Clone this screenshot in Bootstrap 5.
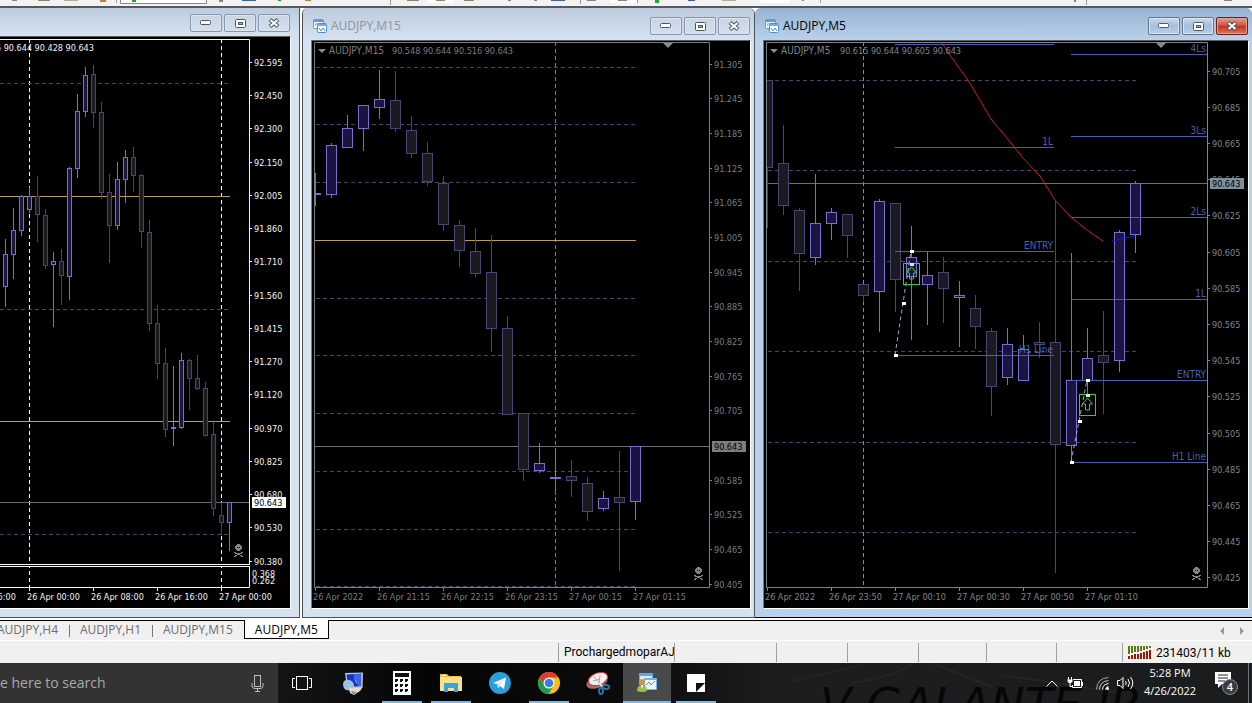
<!DOCTYPE html>
<html lang="en">
<head>
    <meta charset="UTF-8">
    <meta name="viewport" content="width=device-width, initial-scale=1.0">
    <title>AUDJPY,M5</title>
    <!-- Bootstrap CSS -->
    <link href="https://cdn.jsdelivr.net/npm/bootstrap@5.3.0/dist/css/bootstrap.min.css" rel="stylesheet">
    <style>
        body {
            font-family: "Open Sans", "Noto Sans", sans-serif;
            font-size: 12px;
            line-height: 16px;
            background: #f0f0f0;
            color: #000;
            overflow: hidden;
        }
        svg { display: block; }

        /* toolbar remainder above the charts */
        .tool-strip { height: 8px; background: #f3f2f1; border-bottom: 2px solid #55595e; }

        /* chart windows */
        .mdi { background: #fff; padding-bottom: 2px; display: grid; grid-template-columns: minmax(0, 302fr) minmax(0, 453fr) minmax(0, 497fr); }
        .win { background: #d6e2f0; border: 1px solid #4c5158; border-top: 0; border-radius: 6px 6px 0 0; padding: 0 3px 8px 8px; }
        .win-first { border-left: 0; border-radius: 0; padding: 0 8px 8px 0; margin-right: 2px; }
        .win-active { background: #b9d1ea; border-width: 0 0 1px 0; border-color: #000; }
        .win-title { height: 32px; margin: 0 -3px 0 -8px; padding: 4px 4px 0 10px; background: linear-gradient(#bccbdc, #d6e2f0); border-radius: 6px 6px 0 0; color: #8d949c; }
        .win-first .win-title { height: 28px; margin: 0 -8px 0 0; padding: 2px 9px 0 0; border-radius: 0; }
        .win-active .win-title { background: linear-gradient(#98b3d2, #b9d1ea); color: #000; }
        .win-btn { width: 32px; height: 18px; padding: 0; border: 1px solid #8695ab; border-radius: 2px; background: linear-gradient(#c8d5e4, #d3dfec); display: flex; align-items: center; justify-content: center; box-shadow: inset 0 0 0 1px #dbe6f2; }
        .win-active .win-btn { border-color: #62758f; background: linear-gradient(#c9daed, #a4bedb 50%, #b9cfe8); }
        .win-active .win-close { border-color: #6b1a16; background: linear-gradient(#e0a093, #c8503c 50%, #c5301c 51%, #d97860); box-shadow: inset 0 0 0 1px #e3a294; }
        .plot { background: #000; border: 1px solid #fff; border-top-color: #5a5e63; border-left-color: #77797c; }
        .win-first .plot { border-left: 0; }
        .plot svg { width: 100%; height: auto; }
        .plot text { font-family: "DejaVu Sans Condensed", "DejaVu Sans", sans-serif; font-size: 9px; }
        .plot text.note { font-size: 10px; }

        /* chart tabs */
        .chart-tabs { height: 21px; border-top: 1px solid #000; border-bottom: 1px solid #fff; }
        .chart-tabs ul { margin-left: -14px; }
        .chart-tabs a { display: block; padding: 1px 11px 0 11px; color: #6d6d6d; text-decoration: none; height: 19px; }
        .chart-tabs li + li { background: linear-gradient(#777, #777) 0 4px / 1px 12px no-repeat; }
        .chart-tabs li + li.current { background: none; }
        .chart-tabs .current a { background: #fff; color: #000; border: 1px solid #000; border-top: 0; margin-top: -1px; padding: 2px 10px 0 10px; }
        .scroll-btn { border: 0; padding: 0; background: none; width: 20px; height: 16px; display: flex; align-items: center; justify-content: center; }

        /* status bar */
        .status { height: 22px; display: grid; grid-template-columns: 558fr 116fr 102fr 71fr 71fr 68fr 70fr 66fr 130fr; font-family: Roboto, "Open Sans", sans-serif; }
        .status > div { border-left: 1px solid #a0a0a0; margin: 2px 0 1px 0; padding-left: 5px; line-height: 18px; white-space: nowrap; min-width: 0; }
        .status > div:first-child { border: 0; }

        /* taskbar */
        .taskbar { height: 40px; background: linear-gradient(90deg, #141516 22%, #050506 34%, #0b0b0c 50%, #1c1d1e 62%, #1b1c1d); overflow: hidden; }
        .wall { position: absolute; right: 0; top: 0; }
        .search { width: 278px; background: #333; font-size: 14px; }
        .search input { background: none; border: 0; color: #a9a9a9; width: 200px; padding: 0; outline: 0; }
        .search input::placeholder { color: #a9a9a9; opacity: 1; }
        .search .mic { margin-right: 14px; }
        .search .mic, .tray button, .app { background: none; border: 0; padding: 0; }
        .app { width: 48px; height: 40px; margin-right: 1px; display: flex; align-items: center; justify-content: center; }
        .app.task-view { margin-right: 3px; }
        .app.open { background: linear-gradient(#76b9ed, #76b9ed) center bottom / 40px 2px no-repeat; }
        .app.front { background: linear-gradient(#76b9ed, #76b9ed) center bottom / 48px 2px no-repeat #48494a; }
        .tray { color: #fff; }
        .tray .clock { width: 72px; font-size: 11px; line-height: 18px; color: #fff; padding-bottom: 2px; }
        .tray .show-desk { width: 4px; border-left: 1px solid #6a6a6a; }
    </style>
</head>
<body>
<div class="d-flex flex-column min-vh-100">

    <!-- Toolbar -->
    <div class="tool-strip" aria-hidden="true">
        <svg width="1252" height="6">
            <path d="M120.500 0V3.500H206.500V0" fill="#fff" stroke="#8a8a8a"/>
            <path d="M116.500 0V3M390.500 0V5M580.500 0V4M637.500 0V3M820.500 0V3M1086.500 0V5" stroke="#999"/>
            <path d="M428 0h25v3h-25zM610 0h26v3h-26zM760 0h30v3h-30z" fill="#fff"/>
            <path d="M132 0h4v2h-4zM655 0h4v3h-4zM278 0h3v1h-3z" fill="#1fa53a"/>
            <path d="M12 0h5v1h-5zM38 0h12v1H38zM219 0h4v2h-4zM407 0h12v1h-12zM436 0h9v1h-9zM464 0h10v1h-10zM508 0h3v1h-3zM534 0h3v1h-3zM587 0h9v1h-9zM618 0h9v1h-9zM802 0h2v1h-2zM1074 0h2v2h-2zM1224 0h8v1h-8z" fill="#8d8273"/>
            <path d="M100 0h6v2h-6zM305 0h6v1h-6z" fill="#b5863e"/>
            <path d="M242 0h14v1h-14zM551 0h14v1h-14zM688 0h7v1h-7z" fill="#3d5fa5"/>
            <path d="M64 0h14v1H64zM722 0h14v1h-14z" fill="#b9a9a4"/>
        </svg>
    </div>

    <!-- Chart windows -->
    <main class="mdi">
        <section class="win win-first">
            <div class="win-title d-flex align-items-center justify-content-end" data-buttons></div>
            <div class="plot"><svg id="chart-h1" viewBox="0 37 290 571"></svg></div>
        </section>
        <section class="win">
            <div class="win-title d-flex align-items-center">
                <svg width="14" height="14"><use href="#chart-icon"/></svg>
                <span class="ms-1 me-auto">AUDJPY,M15</span>
                <div class="d-flex" data-buttons></div>
            </div>
            <div class="plot"><svg id="chart-m15" viewBox="312 41 438 567"></svg></div>
        </section>
        <section class="win win-active">
            <div class="win-title d-flex align-items-center">
                <svg width="14" height="14"><use href="#chart-icon"/></svg>
                <span class="ms-1 me-auto">AUDJPY,M5</span>
                <div class="d-flex" data-buttons></div>
            </div>
            <div class="plot"><svg id="chart-m5" viewBox="764 41 484 567"></svg></div>
        </section>
    </main>

    <!-- Chart tabs -->
    <nav class="chart-tabs d-flex align-items-center">
        <ul class="list-unstyled d-flex mb-0 me-auto">
            <li><a href="#">AUDJPY,H4</a></li>
            <li><a href="#">AUDJPY,H1</a></li>
            <li><a href="#">AUDJPY,M15</a></li>
            <li class="current"><a href="#" aria-current="page">AUDJPY,M5</a></li>
        </ul>
        <button class="scroll-btn" aria-label="Scroll left"><svg width="4" height="8"><path d="M4 0V8L0 4z" fill="#999"/></svg></button>
        <button class="scroll-btn" aria-label="Scroll right"><svg width="4" height="8"><path d="M0 0V8L4 4z" fill="#999"/></svg></button>
    </nav>

    <!-- Status bar -->
    <footer class="status">
        <div></div>
        <div>ProchargedmoparAJ</div>
        <div></div>
        <div></div>
        <div></div>
        <div></div>
        <div></div>
        <div></div>
        <div class="d-flex align-items-center gap-1"><svg id="traffic" width="24" height="13"></svg><span>231403/11 kb</span></div>
    </footer>

    <!-- Taskbar -->
    <div class="taskbar d-flex position-relative">
        <svg class="wall" width="460" height="40" aria-hidden="true">
            <path d="M0 18L70 2M60 20Q110 12 120 0M140 0L200 24M210 12L330 30" stroke="#242526" stroke-width="2" fill="none"/>
            <text x="28" y="58" font-family="DejaVu Sans" font-style="italic" font-size="46" fill="#060606">V GALANTE JR</text>
        </svg>
        <div class="search d-flex align-items-center position-relative">
            <input type="text" placeholder="e here to search" aria-label="Search">
            <button class="mic ms-auto" aria-label="Voice search">
                <svg width="13" height="17" fill="none" stroke="#bdbdbd"><rect x="3.500" y=".5" width="6" height="11"/><path d="M1 8v3q0 2.500 3 2.500h5q3 0 3-2.500V8M6.500 13.500v3M4 16.500h5"/></svg>
            </button>
        </div>
        <div class="d-flex position-relative me-auto">
            <button class="app task-view" aria-label="Task view">
                <svg width="20" height="14" fill="none" stroke="#fff"><rect x="4.500" y=".5" width="11" height="13"/><path d="M3 2.500H.5v9H3M17 2.500h2.500v9H17"/></svg>
            </button>
            <button class="app" aria-label="Remote desktop">
                <svg width="23" height="25"><path d="M3 2L21 1.500 20.500 17 5 17z" fill="#c3c9d2"/><path d="M4.500 3.500L12 3 13 10 17 15.500 6 15.500z" fill="#1433c4"/><path d="M11 3l8.500-.5L19 15.500l-3-.5z" fill="#3a66e8"/><path d="M1 13q1-5 6-4 5 1 5 6l-2 5-6-1q-3-2-3-6z" fill="#9cc0e2"/><path d="M7 17l13 0-2 3-6 4-4-2z" fill="#e2dbd0"/><path d="M9 20l6 1-4 3z" fill="#a08c79"/></svg>
            </button>
            <button class="app open" aria-label="Calculator">
                <svg width="18" height="24"><path d="M0 0h18v24H0z" fill="#fff"/><path d="M2 2h14v4H2z" fill="#111"/><path d="M2 8h3v2H4v1H2zM7 8h3v2H9v1H7zM12 8h3v2h-1v1h-2zM2 13h3v2H4v1H2zM7 13h3v2H9v1H7zM12 13h3v2h-1v1h-2zM2 18h3v2H4v1H2zM7 18h3v2H9v1H7zM12 18h3v2h-1v1h-2z" fill="#111"/></svg>
            </button>
            <button class="app open" aria-label="File Explorer">
                <svg width="22" height="18"><path d="M0 0h7l2 2h12v4H0z" fill="#e8bd53"/><path d="M0 3h22v14H0z" fill="#fbe08a"/><path d="M2 1h4v1H2z" fill="#fff"/><path d="M4 9h14v9h-4v-4H8v4H4z" fill="#36a3d9"/></svg>
            </button>
            <button class="app" aria-label="Telegram">
                <svg width="22" height="22"><circle cx="11" cy="11" r="11" fill="#2c9fd8"/><path d="M4 11L17 5.500 15 17l-4-3-2 2-.5-4z" fill="#fff"/><path d="M8.500 12L15 7.500 10 13l-1 3z" fill="#b9d4e6"/></svg>
            </button>
            <button class="app open" aria-label="Chrome">
                <svg width="22" height="22"><circle cx="11" cy="11" r="11" fill="#fbbc16"/><path d="M1.500 5.500A11 11 0 0 1 20.500 5.500H11L6.200 13.500z" fill="#dd3b2e"/><path d="M1.500 5.500L6.200 13.500 11 16 15.500 13.700 10.500 22A11 11 0 0 1 1.500 5.500z" fill="#1e9c50"/><circle cx="11" cy="11" r="5.500" fill="#fff"/><circle cx="11" cy="11" r="4.300" fill="#3b7de0"/></svg>
            </button>
            <button class="app" aria-label="Snipping Tool">
                <svg width="24" height="24" fill="none"><ellipse cx="11" cy="11" rx="11" ry="6" transform="rotate(-20 11 11)" fill="#a46a6c"/><ellipse cx="12" cy="8" rx="10" ry="6" transform="rotate(-20 12 8)" fill="#f4eeee" stroke="#c9323a"/><path d="M7 5l9 10M14 4l-1 10M7 10l7-2" stroke="#b3a7a4"/><path d="M13 12l4 4" stroke="#dfe5ea" stroke-width="2"/><ellipse cx="15" cy="20" rx="2" ry="3" stroke="#2176a8" stroke-width="2"/><ellipse cx="20" cy="16" rx="3" ry="2" stroke="#2176a8" stroke-width="2"/></svg>
            </button>
            <button class="app front" aria-label="MetaTrader">
                <svg width="20" height="20"><path d="M2 0h14v12H2z" fill="#5aa9e2"/><path d="M3 3h12v8H3z" fill="#d8ecfa"/><path d="M7 5h13v12H7z" fill="#70b4e6"/><path d="M8 7h11v9H8z" fill="#eef7fd"/><path d="M9 12l3-3 2 3 4-4" stroke="#4e98d4" fill="none"/><circle cx="5" cy="9" r="3" fill="#e18c43"/><path d="M0 18q0-6 5-6t5 6q-5 2-10 0z" fill="#9cbf4c"/><path d="M4 12h2l-1 4z" fill="#fff"/></svg>
            </button>
            <button class="app open" aria-label="Sticky Notes">
                <svg width="18" height="18"><path d="M0 0h18v18H0z" fill="#fff"/><path d="M9 9h9l-9 9z" fill="#111"/></svg>
            </button>
        </div>
        <div class="tray d-flex align-items-center position-relative">
            <button aria-label="Hidden icons"><svg width="12" height="7" fill="none" stroke="#fff"><path d="M.5 6.500L6 1l5.500 5.500"/></svg></button>
            <button class="ms-2" aria-label="Battery"><svg width="18" height="13" fill="none" stroke="#fff"><path d="M7 2.500h8.500v8h-9V8"/><path d="M8 4h6v5H8z" fill="#fff" stroke="none"/><path d="M16.500 5v4"/><path d="M2.500 0v3M5.500 0v3M4 6v3.500h2"/><path d="M1.500 2.500h5v2L5 6H3L1.500 4.500z" fill="#fff" stroke="none"/></svg></button>
            <button class="ms-2 ps-1" aria-label="Network"><svg width="13" height="13" fill="none" stroke="#fff"><path d="M9.500 12.500q0-2 3-3" /><path d="M6.500 12.500q0-5 6-6"/><path d="M3.500 12.500q0-8 9-9" stroke="#ccc"/><path d="M.5 12.500Q1 1 12.500.5" stroke="#aaa"/><circle cx="11.500" cy="11.500" r="1.500" fill="#fff" stroke="none"/></svg></button>
            <button class="ms-2" aria-label="Volume"><svg width="17" height="14" fill="none" stroke="#fff"><path d="M.5 4.500H3l3-3v11l-3-3H.5z"/><path d="M8.500 5q1.500 2 0 4M11 3q3 4 0 8M13.500 1q4.500 6 0 12"/></svg></button>
            <button class="clock text-center">5:28 PM<br>4/26/2022</button>
            <button class="ms-2" aria-label="Notifications"><svg width="26" height="27"><path d="M1 2h16v12H8l-4 4v-4H1z" fill="#fff"/><path d="M4 5h10M4 8h10M4 11h7" stroke="#222"/><circle cx="16" cy="17" r="7.500" fill="#3a3b3c" stroke="#8b8b8b"/><text x="16" y="21" text-anchor="middle" font-size="11" font-weight="600" fill="#fff">4</text></svg></button>
            <button class="show-desk h-100 ms-2 border-start border-secondary" aria-label="Show desktop"></button>
        </div>
    </div>
</div>

<!-- Shared symbols -->
<svg width="0" height="0" class="position-absolute">
    <symbol id="chart-icon" viewBox="0 0 14 14">
        <rect x=".5" y=".5" width="10" height="9" rx="1" fill="#eef5fd" stroke="#5f9cdb"/><path d="M0 1h11v2H0z" fill="#5f9cdb"/><path d="M2 6h1V4M5 7V4l2 2" stroke="#5f9cdb" fill="none"/>
        <rect x="4.500" y="4.500" width="9" height="9" rx="1" fill="#fff" stroke="#4e8dd0"/><path d="M4 5h10v2H4z" fill="#71a9e2"/><path d="M6 9l2 3 2-3 2 3" stroke="#4e8dd0" fill="none"/>
    </symbol>
    <symbol id="skull" viewBox="0 0 9 13">
        <path d="M3 0h3v1h1v1h1v3H7v1H6v1H3V6H2V5H1V2h1V1h1zM0 8h2v1h5V8h2v1H8v1H6v1h2v1h1v1H7v-1H6v-1H3v1H2v1H0v-1h1v-1h2v-1H1V9H0z" fill="#858585"/>
        <path d="M3 3h1v1H3zM5 3h1v1H5z" fill="#000"/>
    </symbol>
</svg>

<!-- Bootstrap JS -->
<script src="https://cdn.jsdelivr.net/npm/bootstrap@5.3.0/dist/js/bootstrap.bundle.min.js"></script>

<script>
    // Window buttons
    document.querySelectorAll('[data-buttons]').forEach(box => {
        box.style.gap = '2px';
        box.innerHTML = `
            <button class="win-btn" aria-label="Minimize"><svg width="12" height="6"><rect x=".5" y=".5" width="10" height="4" rx="1" fill="#fff" stroke="#50565f"/></svg></button>
            <button class="win-btn" aria-label="Maximize"><svg width="11" height="9"><rect x=".5" y=".5" width="10" height="8" rx="1" fill="#fff" stroke="#50565f"/><rect x="3.500" y="3.500" width="4" height="2" fill="#9fb2c8" stroke="#50565f"/></svg></button>
            <button class="win-btn win-close" aria-label="Close"><svg width="12" height="10"><path d="M2 1.500L10 8.500M10 1.500L2 8.500" stroke="#50565f" stroke-width="4"/><path d="M2.500 2L9.500 8M9.500 2L2.500 8" stroke="#fff" stroke-width="2"/></svg></button>`;
    });

    // Traffic meter
    document.getElementById('traffic').innerHTML = [...Array(8)].map((_, i) =>
        `<path d="M${i * 3} 0h2v${8 - Math.round(i * .8)}h-2z" fill="#5a7a12"/><path d="M${i * 3} ${10 - Math.round(i * .8)}h2V13h-2z" fill="#8f1d0c"/>`).join('');

    const hLine = (x1, x2, y, color, dash = '') =>
        `<path d="M${x1} ${y + .5}H${x2}" stroke="${color}" stroke-dasharray="${dash}"/>`;
    const vLine = (x, y1, y2, color, dash = '') =>
        `<path d="M${x + .5} ${y1}V${y2}" stroke="${color}" stroke-dasharray="${dash}"/>`;
    const label = (x, y, text, color, anchor = 'start', cls = '') =>
        `<text x="${x}" y="${y}" fill="${color}" text-anchor="${anchor}" class="${cls}">${text}</text>`;

    // candle: [x, high, body top, body bottom, low, 1 = rising]
    function candle([x, high, top, bottom, low, up], half) {
        const edge = up ? '#7a6fce' : '#4b4375';
        const fill = up ? '#1c1440' : '#1b1a21';
        return `${vLine(x, high, low + 1, edge)}
            <rect x="${x - half + .5}" y="${top + .5}" width="${half * 2}" height="${bottom - top}" fill="${fill}" stroke="${edge}"/>`;
    }

    function drawChart(id, c) {
        const [left, top, right, bottom] = c.frame;
        let out = `<clipPath id="${id}-clip"><rect x="${left}" y="${top}" width="${right - left + 1}" height="${bottom - top + 1}"/></clipPath><g clip-path="url(#${id}-clip)">`;
        out += c.days.map(x => vLine(x, top, bottom, c.dayColor, '4 3')).join('');
        out += c.levels.map(y => hLine(left + 2, c.levelEnd, y, '#4a4568', '4 3')).join('');
        out += c.round.map(y => hLine(left + 1, c.levelEnd, y, '#c2a046')).join('');
        out += hLine(left, right, c.priceY, '#707078');
        out += c.candles.map(k => candle(k, c.half)).join('');
        out += c.extra || '';
        out += '</g>';
        out += `<path d="M${left + .5} ${top + .5}H${right + .5}V${bottom + .5}H${left + .5}z" fill="none" stroke="${c.ink}"/>`;
        out += c.prices.map(([y, t]) => hLine(right, right + 3, y, c.ink) + label(right + 5, y + 4, t, c.ink)).join('');
        out += c.dates.map(([x, t]) => vLine(x + 1, bottom, bottom + 4, c.ink) + label(x - 1, 600, t, c.ink)).join('');
        out += `<rect x="${right + 3}" y="${c.priceY - 5}" width="34" height="11" fill="${c.box}"/>` + label(right + 5, c.priceY + 4, '90.643', '#000');
        out += `<use href="#skull" x="${c.skull[0]}" y="${c.skull[1]}" width="9" height="13"/>`;
        if (c.title) {
            out += `<path d="M${left + 4} 49h8l-4 4z" fill="#8a8a8a"/><path d="M${c.marker - 5} ${top + 1}h10l-5 5z" fill="#8a8a8a"/>`;
            out += label(c.title[0], 54, c.title[1], c.ink, 'start', 'note');
        }
        out += label(c.ohlc[0], c.ohlc[1], c.ohlc[2], c.ink) + (c.after || '');
        document.getElementById(id).innerHTML = out;
    }

    drawChart('chart-h1', {
        frame: [-2, 39, 249, 587], half: 2, ink: '#f4f4f4', box: '#fff', priceY: 502,
        days: [29, 221], dayColor: '#fff', levels: [83, 309, 534], round: [196, 421], levelEnd: 230,
        skull: [234, 544], ohlc: [-4, 51, '5 90.644 90.428 90.643'],
        candles: [
            [5, 239, 254, 286, 306, 1], [13, 208, 230, 254, 278, 1], [21, 195, 196, 230, 235, 1], [29, 187, 196, 209, 212, 1],
            [37, 176, 196, 214, 241, 0], [45, 209, 215, 265, 268, 0], [53, 252, 261, 264, 326, 1], [61, 249, 261, 275, 304, 0],
            [69, 167, 168, 276, 299, 1], [77, 94, 111, 168, 177, 1], [85, 67, 75, 111, 116, 1], [93, 65, 74, 112, 127, 0],
            [101, 102, 112, 192, 198, 0], [109, 174, 192, 225, 262, 0], [117, 162, 179, 225, 229, 1], [125, 150, 157, 179, 202, 1],
            [133, 147, 157, 175, 191, 0], [141, 174, 175, 231, 247, 0], [149, 220, 232, 323, 330, 0], [157, 305, 323, 363, 378, 0],
            [165, 348, 363, 429, 436, 0], [173, 366, 427, 428, 445, 1], [181, 353, 360, 427, 428, 1], [189, 359, 360, 378, 409, 0],
            [197, 355, 378, 388, 389, 0], [205, 382, 388, 435, 436, 0], [213, 420, 434, 508, 515, 0], [221, 503, 515, 522, 534, 0],
            [229, 502, 502, 522, 550, 1]
        ],
        prices: [[62, '92.595'], [95, '92.450'], [128, '92.300'], [162, '92.150'], [195, '92.005'], [228, '91.860'], [261, '91.710'], [295, '91.560'],
            [328, '91.415'], [361, '91.270'], [394, '91.120'], [428, '90.970'], [461, '90.825'], [494, '90.680'], [527, '90.530'], [561, '90.380']],
        dates: [[-36, '25 Apr 16:00'], [28, '26 Apr 00:00'], [92, '26 Apr 08:00'], [156, '26 Apr 16:00'], [220, '27 Apr 00:00']],
        after: hLine(0, 250, 564, '#fff') + hLine(0, 250, 565, '#000') + hLine(0, 250, 566, '#fff') + label(252, 577, '0.368', '#f4f4f4') + label(252, 584, '0.262', '#f4f4f4')
    });

    drawChart('chart-m15', {
        frame: [314, 42, 709, 587], half: 5, ink: '#7d7d7d', box: '#7d7d7d', priceY: 446,
        days: [555], dayColor: '#7d7d7d', levels: [67, 124, 182, 298, 355, 413, 471, 529, 586], round: [240], levelEnd: 636,
        skull: [694, 567], marker: 668, title: [329, 'AUDJPY,M15'], ohlc: [392, 54, '90.548 90.644 90.516 90.643'],
        candles: [
            [315, 173, 193, 194, 205, 1], [331, 143, 145, 194, 197, 1], [347, 115, 128, 147, 147, 1], [363, 105, 105, 128, 150, 1],
            [379, 70, 99, 107, 118, 1], [395, 71, 100, 128, 131, 0], [411, 116, 130, 153, 157, 0], [427, 142, 153, 181, 185, 0],
            [443, 176, 183, 224, 230, 0], [459, 220, 225, 250, 266, 0], [475, 228, 251, 273, 276, 0], [491, 235, 272, 328, 351, 0],
            [507, 316, 328, 414, 414, 0], [523, 413, 413, 469, 480, 0], [539, 443, 463, 470, 472, 1], [555, 450, 477, 478, 494, 1],
            [571, 460, 476, 480, 496, 0], [587, 477, 483, 511, 520, 0], [603, 491, 498, 508, 510, 1], [619, 451, 497, 502, 570, 0],
            [635, 446, 446, 501, 519, 1]
        ],
        prices: [[64, '91.305'], [98, '91.245'], [133, '91.185'], [168, '91.125'], [202, '91.065'], [237, '91.005'], [272, '90.945'], [306, '90.885'],
            [341, '90.825'], [376, '90.765'], [410, '90.705'], [480, '90.585'], [514, '90.525'], [549, '90.465'], [584, '90.405']],
        dates: [[314, '26 Apr 2022'], [378, '26 Apr 21:15'], [442, '26 Apr 22:15'], [506, '26 Apr 23:15'], [570, '27 Apr 00:15'], [634, '27 Apr 01:15']]
    });

    // Trade levels, moving average and buy signals on the M5 chart
    const blue = '#4560b4';
    const dot = (x, y, color = '#fff') => `<rect x="${x - 1}" y="${y - 1}" width="4" height="3" fill="${color}"/>`;
    const signal = (x, y) => `<rect x="${x - 7.5}" y="${y + .5}" width="16" height="21" fill="none" stroke="#2fd22f"/>
        <path d="M${x + .5} ${y + 4}l5 6h-3v6h-4v-6h-3z" fill="none" stroke="#2fd22f"/>${dot(x, y + 1, '#b9ffb9')}`;
    const levels = [
        [895, 1054, 44, ''], [895, 1054, 147, '1L'], [895, 1054, 251, 'ENTRY'], [895, 1054, 355, 'H1 Line'],
        [1071, 1207, 54, '4Ls'], [1071, 1207, 136, '3Ls'], [1071, 1207, 217, '2Ls'], [1071, 1207, 299, '1L'],
        [1071, 1207, 380, 'ENTRY'], [1071, 1207, 462, 'H1 Line']
    ];

    drawChart('chart-m5', {
        frame: [766, 42, 1207, 587], half: 5, ink: '#7f868d', box: '#7f8e9c', priceY: 183,
        days: [863], dayColor: '#8a8a8a', levels: [80, 170, 261, 351, 442, 532], round: [], levelEnd: 1136,
        skull: [1192, 567], marker: 1161, title: [781, 'AUDJPY,M5'], ohlc: [840, 54, '90.615 90.644 90.605 90.643'],
        candles: [
            [767, 80, 80, 167, 227, 0], [783, 125, 163, 205, 214, 0], [799, 208, 210, 253, 290, 0], [815, 174, 223, 257, 264, 1],
            [831, 208, 212, 223, 239, 1], [847, 214, 214, 235, 257, 0], [863, 284, 284, 295, 301, 0], [879, 199, 201, 291, 331, 1],
            [895, 203, 203, 279, 311, 0], [911, 226, 257, 276, 339, 1], [927, 252, 275, 284, 324, 1], [943, 257, 272, 288, 322, 0],
            [959, 281, 295, 297, 346, 1], [975, 295, 308, 326, 348, 0], [991, 328, 331, 386, 415, 0], [1007, 328, 344, 377, 384, 1],
            [1023, 335, 349, 380, 380, 1], [1039, 322, 342, 344, 357, 0], [1055, 200, 342, 444, 572, 0], [1071, 253, 380, 445, 462, 1],
            [1087, 328, 358, 380, 395, 1], [1103, 311, 355, 362, 413, 0], [1119, 230, 232, 360, 371, 1], [1135, 181, 183, 234, 252, 1]
        ],
        extra: levels.map(([a, b, y, t]) => hLine(a, b, y, blue) + (t && label(b - 1, y - 2, t, blue, 'end', 'note'))).join('')
            + '<path d="M942 43L952 58 968 80 977 95 991 119 1007 138 1023 158 1040 176 1055 200 1071 217 1087 230 1103 241" fill="none" stroke="#d81a1a"/>'
            + '<path d="M1112 241L1135 236" stroke="#1a1ad8"/>'
            + '<path d="M895 355L911 251M1071 462L1087 380" stroke="#a9a2d8" stroke-dasharray="4 3"/>'
            + dot(911, 251) + dot(903, 303) + dot(895, 355) + dot(1087, 380) + dot(1079, 421) + dot(1071, 462)
            + signal(911, 263) + signal(1087, 394),
        prices: [[71, '90.705'], [107, '90.685'], [143, '90.665'], [179, '90.645'], [215, '90.625'], [252, '90.605'], [288, '90.585'], [324, '90.565'],
            [360, '90.545'], [396, '90.525'], [433, '90.505'], [469, '90.485'], [505, '90.465'], [541, '90.445'], [577, '90.425']],
        dates: [[766, '26 Apr 2022'], [830, '26 Apr 23:50'], [894, '27 Apr 00:10'], [958, '27 Apr 00:30'], [1022, '27 Apr 00:50'], [1086, '27 Apr 01:10']]
    });
</script>
</body>
</html>
